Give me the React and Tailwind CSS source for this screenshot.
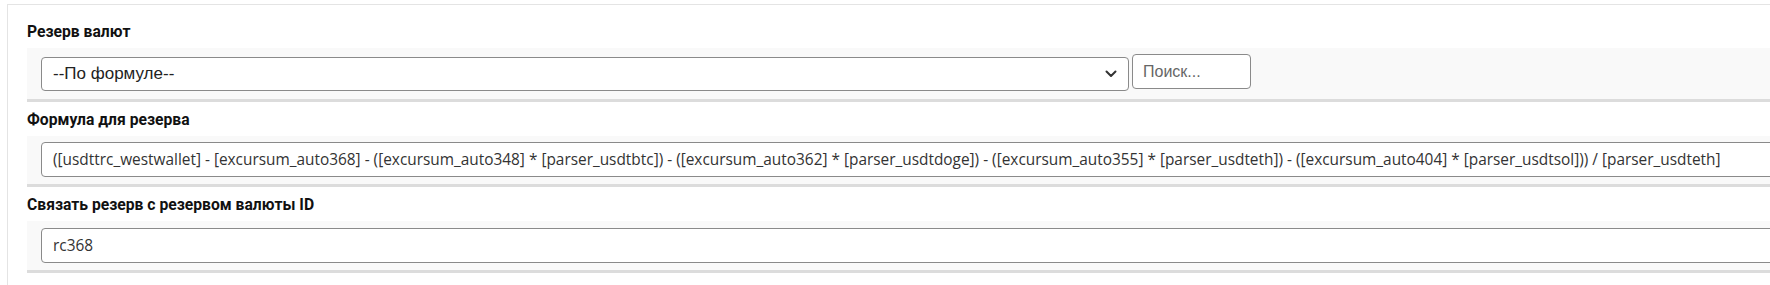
import React from "react";

const formula =
  "([usdttrc_westwallet] - [excursum_auto368] - ([excursum_auto348] * [parser_usdtbtc]) - ([excursum_auto362] * [parser_usdtdoge]) - ([excursum_auto355] * [parser_usdteth]) - ([excursum_auto404] * [parser_usdtsol])) / [parser_usdteth]";

function Label({ children, first }) {
  return (
    <div
      className={
        (first ? "" : "mt-[8px] ") +
        "mb-[6px] h-[20px] text-[15.7px] leading-[20px] font-bold text-[#111] font-['Roboto',sans-serif]"
      }
    >
      {children}
    </div>
  );
}

export default function App() {
  return (
    <div className="w-[1770px] h-[285px] overflow-hidden bg-white">
      <div className="ml-[7px] mt-[4px] h-[300px] border-t border-l border-[#e4e4e4] bg-white pl-[19px] pt-[17px]">
        <Label first>Резерв валют</Label>
        <div className="flex items-start gap-[3px] bg-[#f9f9f9] border-b-[3px] border-[#dcdcdc] pl-[14px] pt-[6px] pb-[8px]">
          <div className="mt-[3px] flex h-[34px] w-[1088px] items-center justify-between rounded-[4px] border border-[#8a8a8a] bg-white pl-[11px] pr-[11px]">
            <span className="text-[17px] text-[#222] font-['Liberation_Sans',Arial,sans-serif]">
              --По формуле--
            </span>
            <svg width="12" height="8" viewBox="0 0 12 8" fill="none">
              <path d="M1.5 1.5 L6 6 L10.5 1.5" stroke="#333" strokeWidth="2" strokeLinecap="round" strokeLinejoin="round" />
            </svg>
          </div>
          <div className="flex h-[35px] w-[119px] items-center rounded-[4px] border border-[#8a8a8a] bg-white pl-[10px]">
            <span className="text-[16px] text-[#666] font-['Liberation_Sans',Arial,sans-serif]">
              Поиск...
            </span>
          </div>
        </div>

        <Label>Формула для резерва</Label>
        <div className="bg-[#f9f9f9] border-b-[3px] border-[#dcdcdc] pl-[14px] pt-[6px] pb-[7px]">
          <div className="flex h-[35px] w-[1800px] items-center rounded-[4px] border border-[#8a8a8a] bg-white pl-[11px]">
            <span className="whitespace-nowrap text-[15.4px] text-[#333] font-['Open_Sans',sans-serif]">
              {formula}
            </span>
          </div>
        </div>

        <Label>Связать резерв с резервом валюты ID</Label>
        <div className="bg-[#f9f9f9] border-b-[3px] border-[#dcdcdc] pl-[14px] py-[7px]">
          <div className="flex h-[35px] w-[1800px] items-center rounded-[4px] border border-[#8a8a8a] bg-white pl-[11px]">
            <span className="whitespace-nowrap text-[15.4px] text-[#333] font-['Open_Sans',sans-serif]">
              rc368
            </span>
          </div>
        </div>
      </div>
    </div>
  );
}
